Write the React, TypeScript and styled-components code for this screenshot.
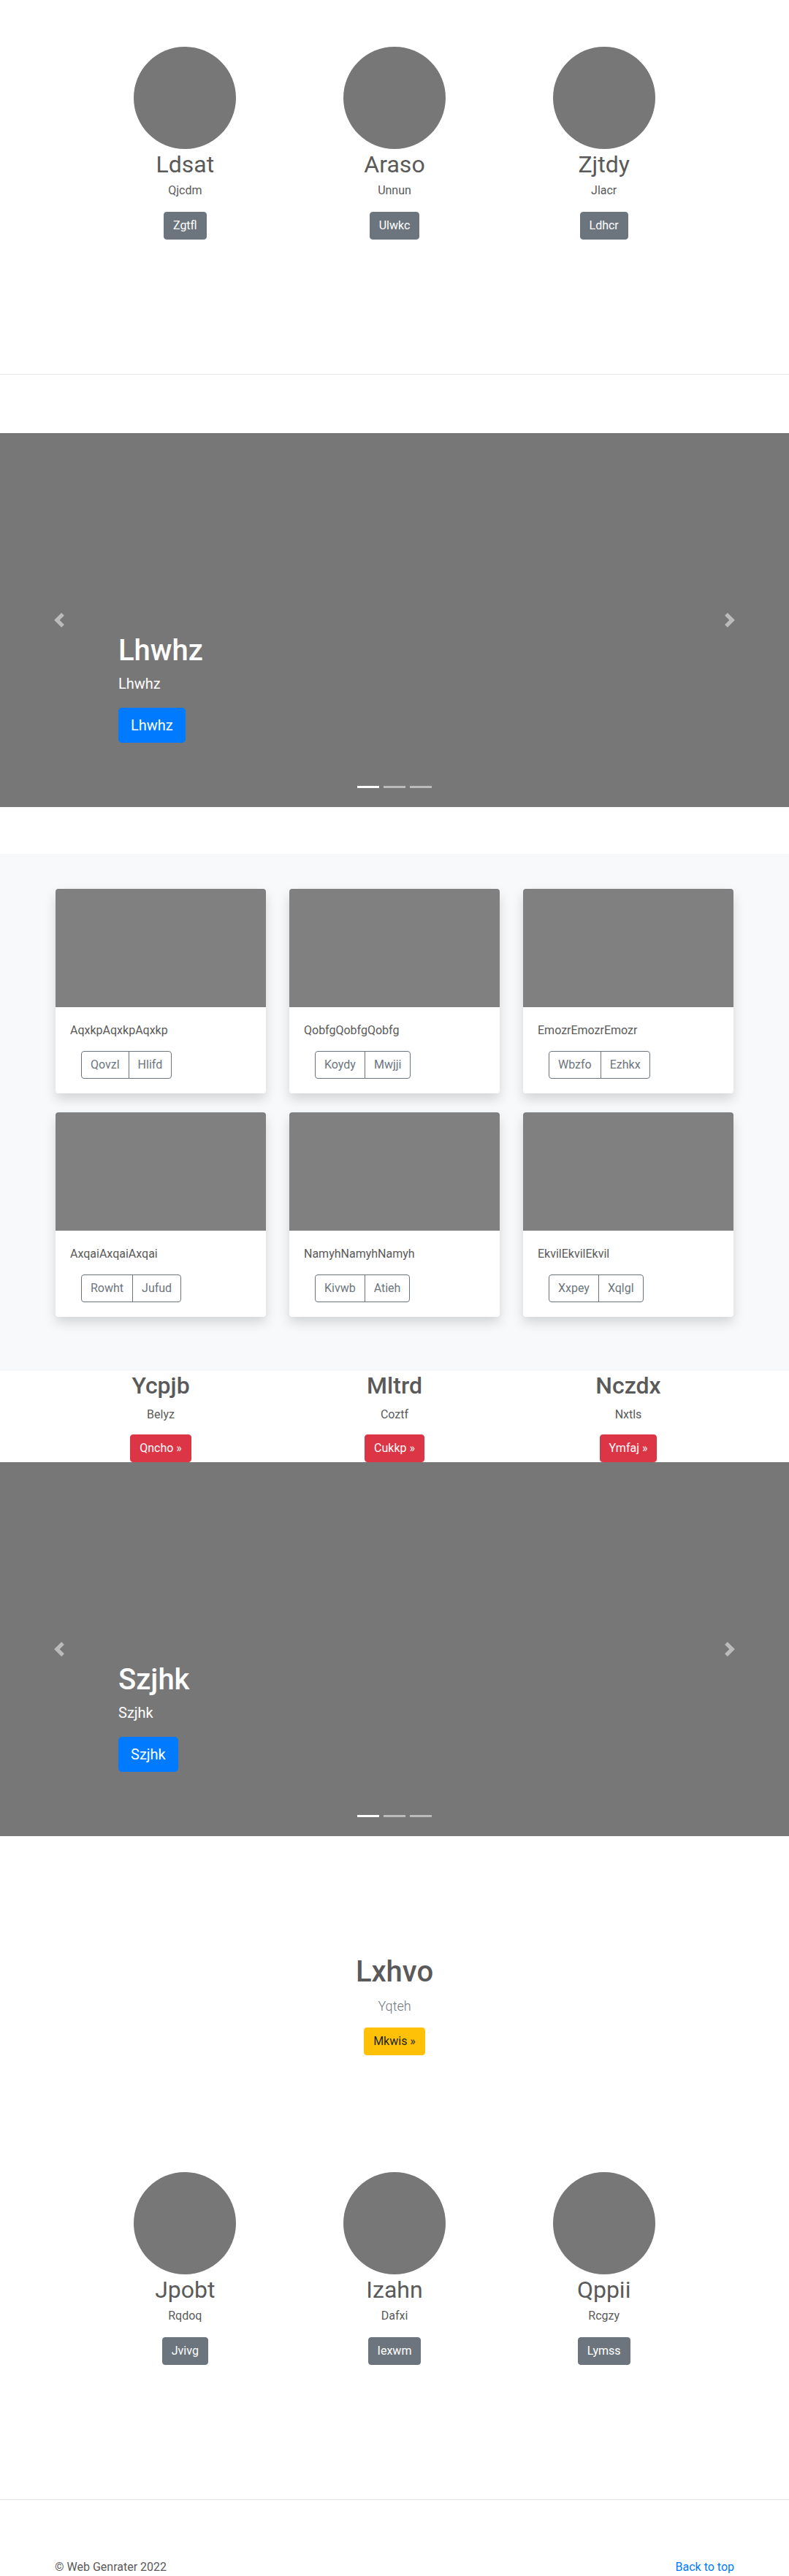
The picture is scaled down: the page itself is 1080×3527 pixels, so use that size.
import React from 'react';
import styled, { createGlobalStyle } from 'styled-components';

const GlobalStyle = createGlobalStyle`
  * { box-sizing: border-box; }
  html, body { margin: 0; padding: 0; }
  body {
    font-family: "Segoe UI", Roboto, "Helvetica Neue", Arial, sans-serif;
    font-size: 16px;
    line-height: 1.5;
    color: #5a5a5a;
    background: #fff;
  }
`;

const Page = styled.div`
  display: flex;
  flex-direction: column;
`;

/* ---------- buttons ---------- */

const variants = {
  secondary: { bg: '#6c757d', fg: '#fff' },
  danger: { bg: '#dc3545', fg: '#fff' },
  warning: { bg: '#ffc107', fg: '#212529' },
  primary: { bg: '#007bff', fg: '#fff' },
};

const Btn = styled.a<{ $variant: keyof typeof variants; $large?: boolean }>`
  display: inline-block;
  font-size: ${p => (p.$large ? '20px' : '16px')};
  line-height: ${p => (p.$large ? '30px' : '24px')};
  padding: ${p => (p.$large ? '8px 16px' : '6px 12px')};
  border-radius: ${p => (p.$large ? '4.8px' : '4px')};
  border: 1px solid ${p => variants[p.$variant].bg};
  background: ${p => variants[p.$variant].bg};
  color: ${p => variants[p.$variant].fg};
  text-decoration: none;
  cursor: pointer;
`;

/* ---------- marketing (circles) ---------- */

const Marketing = styled.section`
  padding: 64px 0 184px;
`;

const MarketingRow = styled.div`
  width: 860px;
  margin: 0 auto;
  display: grid;
  grid-template-columns: repeat(3, 1fr);
`;

const Col = styled.div`
  display: flex;
  flex-direction: column;
  align-items: center;
  text-align: center;
`;

const Avatar = styled.div`
  width: 140px;
  height: 140px;
  border-radius: 50%;
  background: #777;
`;

const Name = styled.h2`
  margin: 2px 0 0;
  font-size: 32px;
  line-height: 38px;
  font-weight: 400;
  color: #5a5a5a;
`;

const Role = styled.p`
  margin: 5px 0 17px;
`;

const Divider = styled.hr`
  margin: 0 0 80px;
  border: 0;
  border-top: 1px solid rgba(0, 0, 0, 0.1);
  height: 0;
`;

/* ---------- carousel ---------- */

const Carousel = styled.section`
  position: relative;
  height: 512px;
  background: #777;
  overflow: hidden;
`;

const Slide = styled.div`
  height: 100%;
  display: flex;
  flex-direction: column;
  justify-content: flex-end;
  align-items: flex-start;
  padding: 0 15% 88px;
  color: #fff;
`;

const SlideTitle = styled.h1`
  margin: 0 0 6px;
  font-size: 40px;
  line-height: 48px;
  font-weight: 500;
`;

const SlideText = styled.p`
  margin: 0 0 18px;
  font-size: 20px;
  line-height: 30px;
`;

const Control = styled.a<{ $side: 'left' | 'right' }>`
  position: absolute;
  top: 0;
  bottom: 0;
  ${p => p.$side}: 0;
  width: 15%;
  display: flex;
  align-items: center;
  justify-content: center;
  opacity: 0.5;
`;

const Indicators = styled.ol`
  position: absolute;
  left: 0;
  right: 0;
  bottom: 26px;
  margin: 0;
  padding: 0;
  list-style: none;
  display: flex;
  justify-content: center;
  gap: 6px;
`;

const Indicator = styled.li<{ $active?: boolean }>`
  width: 30px;
  height: 3px;
  background: #fff;
  opacity: ${p => (p.$active ? 1 : 0.5)};
`;

const Chevron: React.FC<{ dir: 'prev' | 'next' }> = ({ dir }) => (
  <svg width="20" height="20" viewBox="0 0 8 8" fill="#fff">
    {dir === 'prev' ? (
      <path d="M5.25 0l-4 4 4 4 1.5-1.5L4.25 4l2.5-2.5L5.25 0z" />
    ) : (
      <path d="M2.75 0l-1.5 1.5L3.75 4l-2.5 2.5L2.75 8l4-4-4-4z" />
    )}
  </svg>
);

const HeroCarousel: React.FC<{ label: string }> = ({ label }) => (
  <Carousel>
    <Slide>
      <SlideTitle>{label}</SlideTitle>
      <SlideText>{label}</SlideText>
      <Btn $variant="primary" $large>{label}</Btn>
    </Slide>
    <Control $side="left"><Chevron dir="prev" /></Control>
    <Control $side="right"><Chevron dir="next" /></Control>
    <Indicators>
      <Indicator $active />
      <Indicator />
      <Indicator />
    </Indicators>
  </Carousel>
);

/* ---------- album ---------- */

const Album = styled.section`
  margin-top: 64px;
  background: #f8f9fa;
  padding: 48px 0 74px;
`;

const CardGrid = styled.div`
  width: 928px;
  margin: 0 auto;
  display: grid;
  grid-template-columns: repeat(3, 288px);
  column-gap: 32px;
  row-gap: 26px;
`;

const Card = styled.div`
  background: #fff;
  border-radius: 4px;
  overflow: hidden;
  box-shadow: 0 8px 16px rgba(0, 0, 0, 0.15);
`;

const Thumb = styled.div`
  height: 162px;
  background: #808080;
`;

const CardBody = styled.div`
  padding: 20px;
`;

const CardText = styled.p`
  margin: 0 0 16px;
`;

const BtnGroup = styled.div`
  display: inline-flex;
  margin-left: 15px;
`;

const OutlineBtn = styled.button`
  font-family: inherit;
  font-size: 16px;
  line-height: 24px;
  padding: 6px 12px;
  background: transparent;
  color: #6c757d;
  border: 1px solid #6c757d;
  cursor: pointer;

  &:first-child {
    border-radius: 4px 0 0 4px;
  }

  & + & {
    margin-left: -1px;
    border-radius: 0 4px 4px 0;
  }
`;

/* ---------- features (no images) ---------- */

const Features = styled.section`
  padding-top: 1px;
`;

const FeatureRow = styled.div`
  width: 960px;
  margin: 0 auto;
  display: grid;
  grid-template-columns: repeat(3, 1fr);
`;

const FeatureTitle = styled.h2`
  margin: 0 0 9px;
  font-size: 32px;
  line-height: 38px;
  font-weight: 500;
  color: #5a5a5a;
`;

const FeatureText = styled.p`
  margin: 0 0 15px;
`;

/* ---------- jumbotron ---------- */

const Jumbo = styled.section`
  padding: 162px 0 96px;
  display: flex;
  flex-direction: column;
  align-items: center;
  text-align: center;
`;

const JumboTitle = styled.h1`
  margin: 0 0 9px;
  font-size: 40px;
  line-height: 48px;
  font-weight: 500;
  color: #5a5a5a;
`;

const JumboLead = styled.p`
  margin: 0 0 16px;
  font-size: 18px;
  line-height: 27px;
  font-weight: 300;
  color: #6c757d;
`;

/* ---------- footer ---------- */

const Footer = styled.footer`
  width: 930px;
  margin: 0 auto;
  display: flex;
  justify-content: space-between;

  p { margin: 0; }
  a { color: #007bff; text-decoration: none; }
`;

const team1 = [
  { name: 'Ldsat', role: 'Qjcdm', btn: 'Zgtfl' },
  { name: 'Araso', role: 'Unnun', btn: 'Ulwkc' },
  { name: 'Zjtdy', role: 'Jlacr', btn: 'Ldhcr' },
];

const team2 = [
  { name: 'Jpobt', role: 'Rqdoq', btn: 'Jvivg' },
  { name: 'Izahn', role: 'Dafxi', btn: 'Iexwm' },
  { name: 'Qppii', role: 'Rcgzy', btn: 'Lymss' },
];

const cards = [
  { text: 'AqxkpAqxkpAqxkp', a: 'Qovzl', b: 'Hlifd' },
  { text: 'QobfgQobfgQobfg', a: 'Koydy', b: 'Mwjji' },
  { text: 'EmozrEmozrEmozr', a: 'Wbzfo', b: 'Ezhkx' },
  { text: 'AxqaiAxqaiAxqai', a: 'Rowht', b: 'Jufud' },
  { text: 'NamyhNamyhNamyh', a: 'Kivwb', b: 'Atieh' },
  { text: 'EkvilEkvilEkvil', a: 'Xxpey', b: 'Xqlgl' },
];

const features = [
  { title: 'Ycpjb', text: 'Belyz', btn: 'Qncho »' },
  { title: 'Mltrd', text: 'Coztf', btn: 'Cukkp »' },
  { title: 'Nczdx', text: 'Nxtls', btn: 'Ymfaj »' },
];

const Team: React.FC<{ people: typeof team1 }> = ({ people }) => (
  <Marketing>
    <MarketingRow>
      {people.map(p => (
        <Col key={p.name}>
          <Avatar />
          <Name>{p.name}</Name>
          <Role>{p.role}</Role>
          <Btn $variant="secondary">{p.btn}</Btn>
        </Col>
      ))}
    </MarketingRow>
  </Marketing>
);

export default function App() {
  return (
    <Page>
      <GlobalStyle />
      <Team people={team1} />
      <Divider />

      <HeroCarousel label="Lhwhz" />

      <Album>
        <CardGrid>
          {cards.map(c => (
            <Card key={c.text}>
              <Thumb />
              <CardBody>
                <CardText>{c.text}</CardText>
                <BtnGroup>
                  <OutlineBtn>{c.a}</OutlineBtn>
                  <OutlineBtn>{c.b}</OutlineBtn>
                </BtnGroup>
              </CardBody>
            </Card>
          ))}
        </CardGrid>
      </Album>

      <Features>
        <FeatureRow>
          {features.map(f => (
            <Col key={f.title}>
              <FeatureTitle>{f.title}</FeatureTitle>
              <FeatureText>{f.text}</FeatureText>
              <Btn $variant="danger">{f.btn}</Btn>
            </Col>
          ))}
        </FeatureRow>
      </Features>

      <HeroCarousel label="Szjhk" />

      <Jumbo>
        <JumboTitle>Lxhvo</JumboTitle>
        <JumboLead>Yqteh</JumboLead>
        <Btn $variant="warning">Mkwis »</Btn>
      </Jumbo>

      <Team people={team2} />
      <Divider />

      <Footer>
        <p>© Web Genrater 2022</p>
        <p><a href="#">Back to top</a></p>
      </Footer>
    </Page>
  );
}
